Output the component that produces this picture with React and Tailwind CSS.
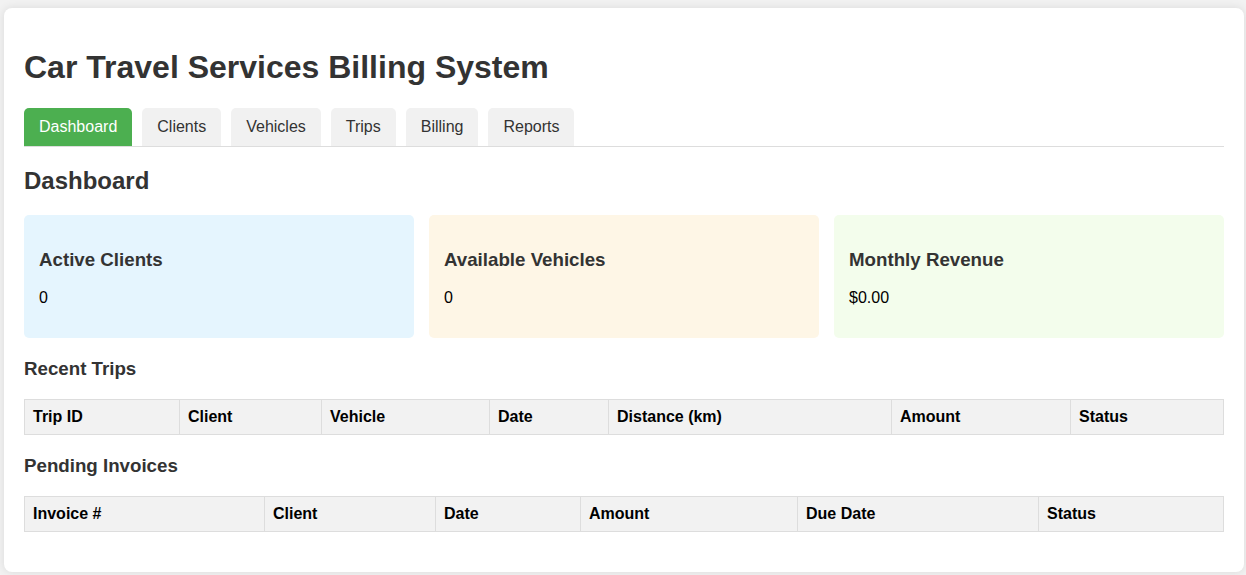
const tabs = ['Dashboard', 'Clients', 'Vehicles', 'Trips', 'Billing', 'Reports'];

const cards = [
  { title: 'Active Clients', value: '0', bg: 'bg-[#e5f5fe]' },
  { title: 'Available Vehicles', value: '0', bg: 'bg-[#fef6e6]' },
  { title: 'Monthly Revenue', value: '$0.00', bg: 'bg-[#f3fdec]' },
];

const tripCols = [
  ['Trip ID', 'w-[155px]'],
  ['Client', 'w-[142px]'],
  ['Vehicle', 'w-[168px]'],
  ['Date', 'w-[119px]'],
  ['Distance (km)', 'w-[283px]'],
  ['Amount', 'w-[179px]'],
  ['Status', ''],
];

const invoiceCols = [
  ['Invoice #', 'w-[240px]'],
  ['Client', 'w-[171px]'],
  ['Date', 'w-[145px]'],
  ['Amount', 'w-[217px]'],
  ['Due Date', 'w-[241px]'],
  ['Status', ''],
];

function DataTable({ cols }) {
  return (
    <table className="w-full table-fixed border-collapse">
      <thead>
        <tr>
          {cols.map(([label, w]) => (
            <th
              key={label}
              className={`${w} border border-[#ddd] bg-[#f2f2f2] px-2 py-2 text-left text-base leading-[18px] font-bold text-black`}
            >
              {label}
            </th>
          ))}
        </tr>
      </thead>
      <tbody />
    </table>
  );
}

export default function App() {
  return (
    <div className="min-h-[575px] bg-[#f2f2f2] pt-2 pr-[2px] pb-1 pl-1 font-['Liberation_Sans',Arial,sans-serif] text-[#333]">
      <div className="rounded-lg bg-white p-5 shadow-[0_0_10px_rgba(0,0,0,0.1)]">
        <h1 className="mt-[21px] mb-[22px] text-[32px] leading-[37px] font-bold">Car Travel Services Billing System</h1>

        <div className="mb-5 flex gap-[10px] border-b border-[#ddd]">
          {tabs.map((tab, i) => (
            <button
              key={tab}
              type="button"
              className={`rounded-t-[5px] px-[15px] py-[10px] text-base leading-[18px] ${
                i === 0 ? 'bg-[#4caf50] text-white' : 'bg-[#f1f1f1] text-[#333]'
              }`}
            >
              {tab}
            </button>
          ))}
        </div>

        <h2 className="mb-[20px] text-2xl leading-[28px] font-bold">Dashboard</h2>

        <div className="mb-5 grid grid-cols-3 gap-[15px]">
          {cards.map((card) => (
            <div key={card.title} className={`${card.bg} rounded-[5px] px-[15px] pt-[34px] pb-[31px]`}>
              <h3 className="text-[18.72px] leading-[21px] font-bold">{card.title}</h3>
              <p className="mt-[19px] text-base leading-[18px] text-black">{card.value}</p>
            </div>
          ))}
        </div>

        <h3 className="mb-5 text-[18.72px] leading-[21px] font-bold">Recent Trips</h3>
        <DataTable cols={tripCols} />

        <h3 className="mt-5 mb-5 text-[18.72px] leading-[21px] font-bold">Pending Invoices</h3>
        <DataTable cols={invoiceCols} />
        <div className="h-5" />
      </div>
    </div>
  );
}
